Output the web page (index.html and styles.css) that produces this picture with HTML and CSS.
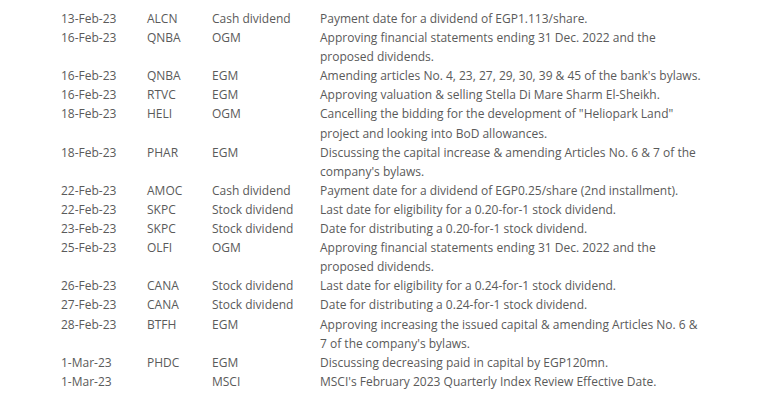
FILE: index.html
```html
<!DOCTYPE html>
<html>
<head>
<meta charset="utf-8">
<link rel="stylesheet" href="styles.css">
</head>
<body>
<div class="calendar">
  <div class="row"><span>13-Feb-23</span><span>ALCN</span><span>Cash dividend</span><span>Payment date for a dividend of EGP1.113/share.</span></div>
  <div class="row"><span>16-Feb-23</span><span>QNBA</span><span>OGM</span><span>Approving financial statements ending 31 Dec. 2022 and the proposed dividends.</span></div>
  <div class="row"><span>16-Feb-23</span><span>QNBA</span><span>EGM</span><span>Amending articles No. 4, 23, 27, 29, 30, 39 &amp; 45 of the bank's bylaws.</span></div>
  <div class="row"><span>16-Feb-23</span><span>RTVC</span><span>EGM</span><span>Approving valuation &amp; selling Stella Di Mare Sharm El-Sheikh.</span></div>
  <div class="row"><span>18-Feb-23</span><span>HELI</span><span>OGM</span><span>Cancelling the bidding for the development of "Heliopark Land" project and looking into BoD allowances.</span></div>
  <div class="row"><span>18-Feb-23</span><span>PHAR</span><span>EGM</span><span>Discussing the capital increase &amp; amending Articles No. 6 &amp; 7 of the company's bylaws.</span></div>
  <div class="row"><span>22-Feb-23</span><span>AMOC</span><span>Cash dividend</span><span>Payment date for a dividend of EGP0.25/share (2nd installment).</span></div>
  <div class="row"><span>22-Feb-23</span><span>SKPC</span><span>Stock dividend</span><span>Last date for eligibility for a 0.20-for-1 stock dividend.</span></div>
  <div class="row"><span>23-Feb-23</span><span>SKPC</span><span>Stock dividend</span><span>Date for distributing a 0.20-for-1 stock dividend.</span></div>
  <div class="row"><span>25-Feb-23</span><span>OLFI</span><span>OGM</span><span>Approving financial statements ending 31 Dec. 2022 and the proposed dividends.</span></div>
  <div class="row"><span>26-Feb-23</span><span>CANA</span><span>Stock dividend</span><span>Last date for eligibility for a 0.24-for-1 stock dividend.</span></div>
  <div class="row"><span>27-Feb-23</span><span>CANA</span><span>Stock dividend</span><span>Date for distributing a 0.24-for-1 stock dividend.</span></div>
  <div class="row"><span>28-Feb-23</span><span>BTFH</span><span>EGM</span><span>Approving increasing the issued capital &amp; amending Articles No. 6 &amp; 7 of the company's bylaws.</span></div>
  <div class="row"><span>1-Mar-23</span><span>PHDC</span><span>EGM</span><span>Discussing decreasing paid in capital by EGP120mn.</span></div>
  <div class="row"><span>1-Mar-23</span><span></span><span>MSCI</span><span>MSCI's February 2023 Quarterly Index Review Effective Date.</span></div>
</div>
</body>
</html>
```
FILE: styles.css
```css
html, body {
  margin: 0;
  padding: 0;
  background: #ffffff;
}
body {
  font-family: "Open Sans", "Noto Sans", sans-serif;
  font-size: 12px;
  line-height: 19.1px;
  color: #5a5a5a;
}
.calendar {
  padding: 9px 0 0 61px;
  display: flex;
  flex-direction: column;
}
.row {
  display: grid;
  grid-template-columns: 86px 65px 108px 382px;
}
```
